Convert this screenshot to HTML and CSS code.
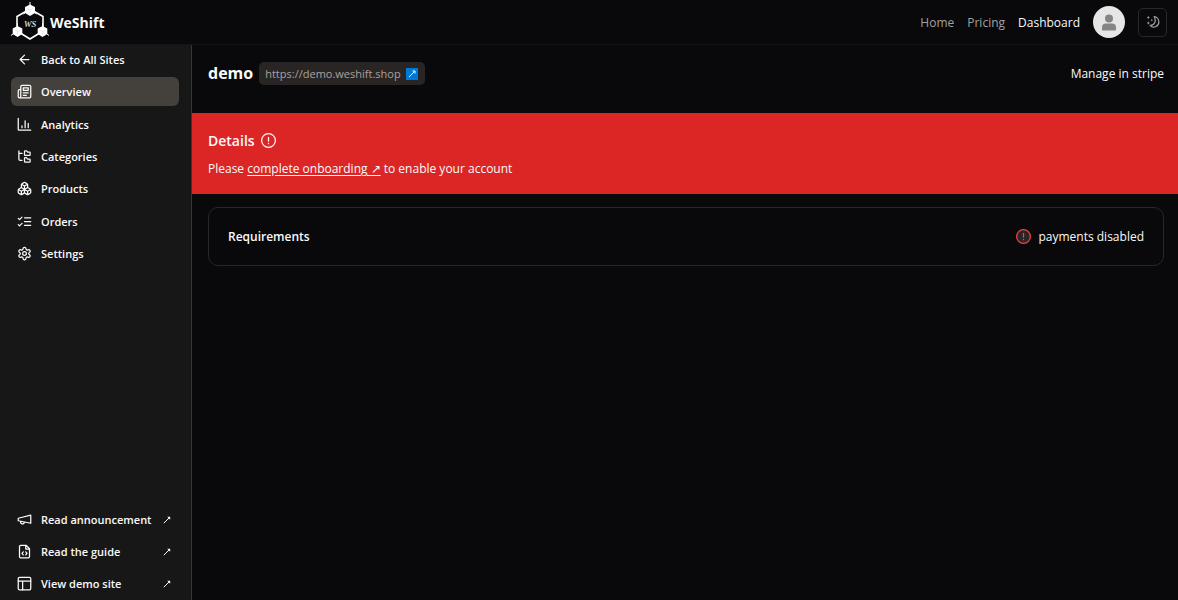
FILE: index.html
```html
<!DOCTYPE html>
<html lang="en">
<head>
<meta charset="utf-8">
<meta name="viewport" content="width=device-width, initial-scale=1">
<title>WeShift – demo</title>
<link rel="stylesheet" href="styles.css">
</head>
<body>
<header class="topbar">
  <a class="brand" href="#">
    <svg class="brand-logo" viewBox="0 0 40 40" aria-hidden="true">
      <path d="M20 7 33 14.500V29L20 37 7 29V14.500Z" fill="none" stroke="#fff" stroke-width="1.600"/>
      <g fill="#fff"><path d="M20 2.500 25 5v6l-5 3-5-3V5Z"/><path d="M20 0v3M15 11l-1.500 1M25 11l1.500 1" stroke="#fff"/><path d="m17 6.500 3 1.500 3-1.500M20 8v3" stroke="#ccc" stroke-width=".5" fill="none"/></g>
      <g fill="#fff"><path d="m7.500 24 4.800 2.500v5.500l-4.800 3-4.800-3v-5.500Z"/><path d="M7.500 21.500V25M3 32l-2 1.500M12 32l1.500 1" stroke="#fff"/><path d="m4.500 28 3 1.500 3-1.500M7.500 29.500v3" stroke="#ccc" stroke-width=".5" fill="none"/></g>
      <g fill="#fff"><path d="m32.500 24 4.800 2.500v5.500l-4.800 3-4.800-3v-5.500Z"/><path d="M32.500 21.500V25M37 32l2 1.500M28 32l-1.500 1" stroke="#fff"/><path d="m29.500 28 3 1.500 3-1.500M32.500 29.500v3" stroke="#ccc" stroke-width=".5" fill="none"/></g>
      <text class="brand-initials" x="20" y="25" text-anchor="middle">WS</text>
    </svg>
    <span>WeShift</span>
  </a>
  <nav class="topnav" aria-label="Primary">
    <a href="#">Home</a>
    <a href="#">Pricing</a>
    <a class="current" href="#" aria-current="page">Dashboard</a>
    <button class="avatar" type="button" aria-label="Account">
      <svg viewBox="0 0 32 32"><circle cx="16" cy="12.500" r="4" fill="#858585"/><path d="M9 24v-2.500a4 4 0 0 1 4-4h6a4 4 0 0 1 4 4V24q0 .5-.5.5h-13Q9 24.500 9 24Z" fill="#858585"/></svg>
    </button>
    <button class="theme" type="button" aria-label="Toggle theme">
      <svg class="icon moon" viewBox="0 0 14 14"><path d="M8.200 1.500c5.300 1 6.300 7.800 1.800 10-2.300 1.100-4.600.5-5.800-1.200 4.700.2 6.200-4.500 4-8.800Z"/><path class="stars" d="m2.300.8.500 1.200 1.200.5-1.200.5-.5 1.200L1.800 3 .6 2.500 1.800 2ZM5.800 3.800l.4 1 1 .4-1 .4-.4 1-.4-1-1-.4 1-.4ZM2.300 6.300l.5 1.200 1.200.5-1.200.5-.5 1.200-.5-1.200L.6 8l1.200-.5Z"/></svg>
    </button>
  </nav>
</header>

<div class="shell">
  <aside class="sidebar">
    <nav class="menu" aria-label="Site">
      <div class="menu-group">
        <a class="item" href="#"><svg class="icon" viewBox="0 0 24 24"><path d="m12 19-7-7 7-7M19 12H5"/></svg><span>Back to All Sites</span></a>
        <a class="item selected" href="#" aria-current="page"><svg class="icon" viewBox="0 0 24 24"><path d="M4 22h16a2 2 0 0 0 2-2V4a2 2 0 0 0-2-2H8a2 2 0 0 0-2 2v16a2 2 0 0 1-2 2Zm0 0a2 2 0 0 1-2-2v-9c0-1.100.9-2 2-2h2M18 14h-8M15 18h-5M10 6h8v4h-8Z"/></svg><span>Overview</span></a>
      </div>
      <div class="menu-group">
        <a class="item" href="#"><svg class="icon" viewBox="0 0 24 24"><path d="M2 2v18a1 1 0 0 0 1 1h19M8 17v-3M13 17V6M18 17V10"/></svg><span>Analytics</span></a>
        <a class="item" href="#"><svg class="icon" viewBox="0 0 24 24"><path d="M20 10a1 1 0 0 0 1-1V6a1 1 0 0 0-1-1h-2.500a1 1 0 0 1-.8-.4l-.9-1.200A1 1 0 0 0 15 3h-2a1 1 0 0 0-1 1v5a1 1 0 0 0 1 1ZM20 21a1 1 0 0 0 1-1v-3a1 1 0 0 0-1-1h-2.900a1 1 0 0 1-.9-.55l-.42-.86a1 1 0 0 0-.92-.6H13a1 1 0 0 0-1 1v5a1 1 0 0 0 1 1ZM3 5a2 2 0 0 0 2 2h3M3 3v13a2 2 0 0 0 2 2h3"/></svg><span>Categories</span></a>
        <a class="item" href="#"><svg class="icon" viewBox="0 0 24 24"><path d="M2.970 12.920A2 2 0 0 0 2 14.630v3.240a2 2 0 0 0 .97 1.710l3 1.800a2 2 0 0 0 2.060 0L12 19v-5.500l-5-3-4.030 2.420ZM7 16.500l-4.740-2.850M7 16.500l5-3M7 16.500v5.170M12 13.500V19l3.970 2.380a2 2 0 0 0 2.060 0l3-1.800a2 2 0 0 0 .97-1.710v-3.240a2 2 0 0 0-.97-1.710L17 10.500l-5 3ZM17 16.500l-5-3M17 16.500l4.740-2.850M17 16.500v5.170M7.970 4.420A2 2 0 0 0 7 6.130v4.370l5 3 5-3V6.130a2 2 0 0 0-.97-1.710l-3-1.800a2 2 0 0 0-2.060 0l-3 1.800ZM12 8 7.260 5.150M12 8l4.740-2.850M12 13.500V8"/></svg><span>Products</span></a>
      </div>
      <div class="menu-group">
        <a class="item" href="#"><svg class="icon" viewBox="0 0 24 24"><path d="m2 17 2 2 4-4M2 7l2 2 4-4M12 6h10M12 12h10M12 18h10"/></svg><span>Orders</span></a>
        <a class="item" href="#"><svg class="icon" viewBox="0 0 24 24"><path d="M12.220 2h-.44a2 2 0 0 0-2 2v.18a2 2 0 0 1-1 1.730l-.43.25a2 2 0 0 1-2 0l-.15-.08a2 2 0 0 0-2.730.73l-.22.38a2 2 0 0 0 .73 2.730l.15.1a2 2 0 0 1 1 1.720v.51a2 2 0 0 1-1 1.740l-.15.09a2 2 0 0 0-.73 2.730l.22.38a2 2 0 0 0 2.730.73l.15-.08a2 2 0 0 1 2 0l.43.25a2 2 0 0 1 1 1.730V20a2 2 0 0 0 2 2h.44a2 2 0 0 0 2-2v-.18a2 2 0 0 1 1-1.730l.43-.25a2 2 0 0 1 2 0l.15.08a2 2 0 0 0 2.730-.73l.22-.39a2 2 0 0 0-.73-2.730l-.15-.08a2 2 0 0 1-1-1.740v-.5a2 2 0 0 1 1-1.740l.15-.09a2 2 0 0 0 .73-2.730l-.22-.38a2 2 0 0 0-2.730-.73l-.15.08a2 2 0 0 1-2 0l-.43-.25a2 2 0 0 1-1-1.730V4a2 2 0 0 0-2-2z"/><circle cx="12" cy="12" r="3"/></svg><span>Settings</span></a>
      </div>
    </nav>
    <nav class="menu" aria-label="Resources">
      <div class="menu-group">
        <a class="item" href="#"><svg class="icon" viewBox="0 0 24 24"><path d="m2 10 20-5v13L2 14ZM11.600 16.800a3 3 0 1 1-5.800-1.600"/></svg><span>Read announcement</span><svg class="arrow" viewBox="0 0 8 8"><path d="m.8 7.200 6-6"/><path class="head" d="M4.200.8h3v3Z"/></svg></a>
        <a class="item" href="#"><svg class="icon" viewBox="0 0 24 24"><path d="M14.500 2H6a2 2 0 0 0-2 2v16a2 2 0 0 0 2 2h12a2 2 0 0 0 2-2V7.500ZM14 2v6h6M10 12.500 8 15l2 2.500M14 12.500l2 2.500-2 2.500"/></svg><span>Read the guide</span><svg class="arrow" viewBox="0 0 8 8"><path d="m.8 7.200 6-6"/><path class="head" d="M4.200.8h3v3Z"/></svg></a>
        <a class="item" href="#"><svg class="icon" viewBox="0 0 24 24"><rect x="2" y="2" width="20" height="20" rx="2"/><path d="M2 8h20M9 22V8"/></svg><span>View demo site</span><svg class="arrow" viewBox="0 0 8 8"><path d="m.8 7.200 6-6"/><path class="head" d="M4.200.8h3v3Z"/></svg></a>
      </div>
    </nav>
  </aside>

  <main class="content">
    <section class="site-head">
      <h1>demo</h1>
      <a class="site-url" href="#">https://demo.weshift.shop <svg class="url-mark" viewBox="0 0 12 12" aria-hidden="true"><rect width="12" height="12" fill="#0078d7"/><path d="m3 9 5.500-5.500M6.500 3H9v2.500" fill="none" stroke="#fff"/></svg></a>
      <a class="manage" href="#">Manage in stripe</a>
    </section>
    <section class="alert">
      <h2>Details <svg class="icon" viewBox="0 0 24 24"><circle cx="12" cy="12" r="11"/><path d="M12 7v6M12 16.500v.5"/></svg></h2>
      <p>Please <a href="#">complete onboarding ↗</a> to enable your account</p>
    </section>
    <section class="card">
      <h3>Requirements</h3>
      <p class="status"><svg class="icon status-icon" viewBox="0 0 24 24"><circle cx="12" cy="12" r="11"/><path d="M12 7v6M12 16.500v.5"/></svg>payments disabled</p>
    </section>
  </main>
</div>
</body>
</html>
```
FILE: styles.css
```css
* { box-sizing: border-box; }

body {
  margin: 0;
  min-height: 100vh;
  display: flex;
  flex-direction: column;
  background: #09090b;
  color: #fafafa;
  font: 12px/21px "Open Sans", "Noto Sans", sans-serif;
}

a { color: inherit; text-decoration: none; }
h1, h2, h3, p { margin: 0; }
button { padding: 0; font: inherit; color: inherit; cursor: pointer; }

.icon {
  width: 15px;
  height: 15px;
  flex: none;
  fill: none;
  stroke: currentColor;
  stroke-width: 2;
  stroke-linecap: round;
  stroke-linejoin: round;
}

.arrow {
  width: 8px;
  height: 8px;
  flex: none;
  fill: none;
  stroke: currentColor;
}
.arrow .head { fill: currentColor; stroke: none; }

.topbar {
  display: flex;
  align-items: center;
  justify-content: space-between;
  height: 45px;
  padding: 0 11px 0 10px;
  border-bottom: 1px solid #141417;
}

.brand {
  display: flex;
  align-items: center;
  font-size: 14px;
  font-weight: 700;
}
.brand-logo { width: 40px; height: 40px; }
.brand-initials { font: italic 9px "Liberation Serif", serif; fill: #fff; }

.topnav { display: flex; align-items: center; gap: 13px; color: #a1a1a1; }
.topnav .current { color: #fafafa; }

.avatar {
  width: 32px;
  height: 32px;
  border: 0;
  border-radius: 50%;
  background: #e6e6e6;
}
.avatar svg { display: block; width: 32px; height: 32px; }

.theme {
  display: grid;
  place-items: center;
  width: 29px;
  height: 29px;
  border: 1px solid #27272a;
  border-radius: 5px;
  background: transparent;
}
.moon { width: 14px; height: 14px; stroke-width: 1.2; }
.moon .stars { fill: currentColor; stroke: none; }

.shell { flex: 1; display: flex; }

.sidebar {
  display: flex;
  flex-direction: column;
  justify-content: space-between;
  flex: 0 0 192px;
  padding: 0 12px 2px 11px;
  border-right: 1px solid #35353a;
  background: #171717;
}

.menu { display: grid; gap: 4px; }
.menu-group { display: grid; gap: 3px; }

.item {
  display: flex;
  align-items: center;
  gap: 9px;
  height: 29px;
  padding: 0 8px 0 6px;
  border-radius: 6px;
  font-size: 11px;
  font-weight: 600;
  white-space: nowrap;
}
.item.selected { background: #44403c; }
.item .arrow { margin-left: auto; }

.content { flex: 1; min-width: 0; }

.site-head {
  display: flex;
  align-items: center;
  gap: 6px;
  padding: 17px 14px 28px 16px;
}
.site-head h1 { font-size: 16px; font-weight: 700; }
.site-url {
  display: flex;
  align-items: center;
  gap: 5px;
  padding: 1px 7px 1px 6px;
  border-radius: 5px;
  background: #292524;
  color: #a8a29e;
  font-size: 11px;
}
.url-mark { width: 12px; height: 12px; }
.manage { margin-left: auto; }

.alert { padding: 17px 16px 15px; background: #dc2626; }
.alert h2 {
  display: flex;
  align-items: center;
  gap: 6px;
  margin-bottom: 7px;
  font-size: 14px;
  font-weight: 600;
}
.alert p a { text-decoration: underline; text-underline-offset: 2px; }

.card {
  display: flex;
  align-items: center;
  justify-content: space-between;
  margin: 13px 14px 0 16px;
  padding: 18px 19px;
  border: 1px solid #27272a;
  border-radius: 10px;
}
.card h3 { font-size: 12px; font-weight: 600; }
.status { display: flex; align-items: center; gap: 7px; }
.status-icon { stroke: #ef4444; }
.status-icon circle { fill: #27272a; }
```
